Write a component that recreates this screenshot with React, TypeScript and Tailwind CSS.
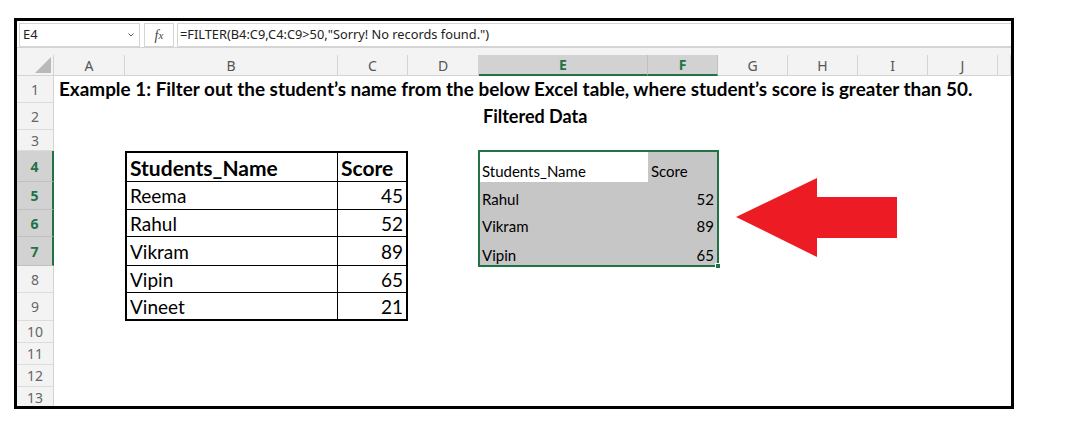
import React from 'react';

const COLS = ['A', 'B', 'C', 'D', 'E', 'F', 'G', 'H', 'I', 'J', ''];

const leftTable: Record<number, [string, string]> = {
  4: ['Students_Name', 'Score'],
  5: ['Reema', '45'],
  6: ['Rahul', '52'],
  7: ['Vikram', '89'],
  8: ['Vipin', '65'],
  9: ['Vineet', '21'],
};

const filtered: Record<number, [string, string]> = {
  4: ['Students_Name', 'Score'],
  5: ['Rahul', '52'],
  6: ['Vikram', '89'],
  7: ['Vipin', '65'],
};

const calibri = { fontFamily: 'Lato, "Open Sans", sans-serif' };
const ui = { fontFamily: '"Noto Sans", "Open Sans", sans-serif' };

function RowHead({ n }: { n: number }) {
  const sel = n >= 4 && n <= 7;
  return (
    <div
      className={
        sel
          ? 'flex items-center justify-center bg-[#d2d2d2] border-r-2 border-[#217346] border-b border-b-[#c0c0c0] text-[14px] font-bold text-[#217346]'
          : 'flex items-center justify-center bg-[#f3f3f3] border-r border-[#d4d4d4] border-b border-b-[#dcdcdc] text-[14px] text-[#666]'
      }
      style={ui}
    >
      {n}
    </div>
  );
}

function LeftCell({ r, c }: { r: number; c: 'B' | 'C' }) {
  const [name, score] = leftTable[r];
  const head = r === 4;
  const last = r === 9;
  let cls = 'flex items-center border-black whitespace-nowrap overflow-hidden ';
  cls += c === 'B' ? 'border-l-2 border-r pl-[3px] ' : 'border-r-2 pl-[3px] pr-[3px] ';
  cls += head ? 'border-t-2 border-b font-bold text-[21px] pt-[2px] ' : last ? 'border-b-2 text-[19px] pt-[2px] ' : 'border-b text-[19px] pt-[2px] ';
  if (c === 'C' && !head) cls += 'justify-end ';
  return (
    <div className={cls} style={calibri}>
      {c === 'B' ? name : score}
    </div>
  );
}

function RightCell({ r, c }: { r: number; c: 'E' | 'F' }) {
  const [name, score] = filtered[r];
  const active = r === 4 && c === 'E';
  let cls = 'flex items-end pb-0 text-[15px] text-black whitespace-nowrap ';
  cls += active ? 'bg-white pl-[3px] ' : 'bg-[#c6c6c6] pl-[3px] pr-[4px] ';
  if (c === 'F' && r > 4) cls += 'justify-end ';
  return (
    <div className={cls} style={calibri}>
      {c === 'E' ? name : score}
    </div>
  );
}

function Empty() {
  return <div />;
}

function BodyRow({ r }: { r: number }) {
  const cells: React.ReactNode[] = [<RowHead key="h" n={r} />];
  COLS.forEach((col) => {
    const key = r + col;
    if (r >= 4 && r <= 9 && (col === 'B' || col === 'C')) {
      cells.push(<LeftCell key={key} r={r} c={col as 'B' | 'C'} />);
    } else if (r >= 4 && r <= 7 && (col === 'E' || col === 'F')) {
      cells.push(<RightCell key={key} r={r} c={col as 'E' | 'F'} />);
    } else {
      cells.push(<Empty key={key} />);
    }
  });
  return <>{cells}</>;
}

export default function App() {
  return (
    <div className="relative w-[1074px] h-[448px] bg-white overflow-hidden">
      <div className="ml-[14px] mt-[18px] w-[1000px] h-[391px] border-[3px] border-black overflow-hidden flex flex-col">
        {/* formula bar */}
        <div className="h-[26px] flex items-stretch gap-[4px] pl-[2px] pt-[2px] bg-white shrink-0" style={ui}>
          <div className="w-[121px] border border-[#d4d4d4] flex items-center justify-between pl-[3px] pr-[3px] text-[13px] text-[#222]">
            <span>E4</span>
            <svg width="8" height="6" viewBox="0 0 8 6" className="mr-[1px]">
              <path d="M1.5 1.5 L4 4 L6.5 1.5" fill="none" stroke="#555" strokeWidth="1" />
            </svg>
          </div>
          <div className="w-[30px] border border-[#d4d4d4] flex items-center justify-center text-[14px] italic text-[#444]" style={{ fontFamily: '"Liberation Serif", serif' }}>
            <span>f</span>
            <span className="text-[11px]">x</span>
          </div>
          <div className="flex-1 border border-[#d4d4d4] border-r-0 flex items-center pl-[2px] text-[12.8px] text-[#222] -ml-[1px]">
            =FILTER(B4:C9,C4:C9&gt;50,"Sorry! No records found.")
          </div>
        </div>
        <div className="h-[8px] bg-[#f3f3f3] border-t border-[#d4d4d4] shrink-0" />

        {/* sheet grid */}
        <div className="relative grid grid-cols-[37px_71px_213px_70px_71px_169px_70px_70px_70px_70px_70px_13px] grid-rows-[21px_27px_27px_21px_31px_28px_27px_29px_27px_28px_22px_22px_22px_22px]">
          {/* column headers */}
          <div className="bg-[#f3f3f3] border-r border-b border-[#d4d4d4] flex items-end justify-end pr-[2px] pb-[2px]">
            <svg width="16" height="16" viewBox="0 0 16 16">
              <polygon points="16,0 16,16 0,16" fill="#b9b9b9" />
            </svg>
          </div>
          {COLS.map((c) =>
            c === 'E' || c === 'F' ? (
              <div key={c} className="flex items-center justify-center bg-[#d2d2d2] border-r border-[#c0c0c0] border-b-2 border-b-[#217346] text-[14px] font-bold text-[#217346]" style={ui}>
                {c}
              </div>
            ) : (
              <div key={c} className="flex items-center justify-center bg-[#f3f3f3] border-r border-[#d4d4d4] border-b border-b-[#d4d4d4] text-[14px] text-[#555]" style={ui}>
                {c}
              </div>
            )
          )}

          {/* row 1 */}
          <RowHead n={1} />
          <div className="col-span-11 flex items-center pl-[5px] whitespace-nowrap text-[18.9px] font-bold text-black" style={calibri}>
            Example 1: Filter out the student’s name from the below Excel table, where student’s score is greater than 50.
          </div>

          {/* row 2 */}
          <RowHead n={2} />
          <div className="col-span-4" />
          <div className="flex items-center pl-[4px] whitespace-nowrap text-[18px] font-bold text-black" style={calibri}>
            Filtered Data
          </div>
          <div className="col-span-6" />

          {/* row 3 */}
          <RowHead n={3} />
          <div className="col-span-11" />

          {[4, 5, 6, 7, 8, 9, 10, 11, 12, 13].map((r) => (
            <BodyRow key={r} r={r} />
          ))}

          {/* selection outline over E4:F7 */}
          <div className="absolute left-[461px] top-[95px] w-[241px] h-[117px] border-2 border-[#217346] pointer-events-none">
            <div className="absolute -right-[4px] -bottom-[4px] w-[6px] h-[6px] bg-[#217346] border border-white" />
          </div>
        </div>
      </div>

      {/* red arrow */}
      <svg className="absolute left-0 top-0" width="1074" height="448" viewBox="0 0 1074 448">
        <polygon points="736,217 817,178 817,197 897,197 897,238 817,238 817,257" fill="#ed1c24" />
      </svg>
    </div>
  );
}
